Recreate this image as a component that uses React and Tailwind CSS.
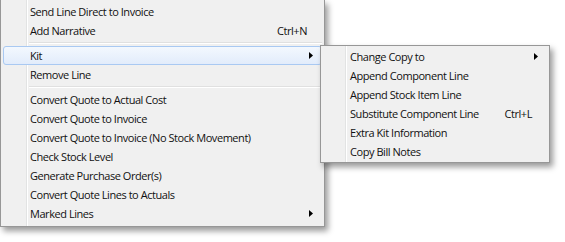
import React from "react";

const Arrow = () => (
  <svg width="4" height="7" viewBox="0 0 4 7" className="block">
    <path d="M0 0 L4 3.5 L0 7 Z" fill="#000" />
  </svg>
);

const Item = ({ label, shortcut, arrow, active, sc }) => (
  <div
    className={
      "relative flex items-center h-[19px] mx-[2px] " +
      (active
        ? "rounded-[3px] border border-[#a9c9f2] bg-gradient-to-b from-[#f3f8fe] to-[#e2ecfb]"
        : "border border-transparent")
    }
  >
    <div className="w-[26px] shrink-0" />
    <div className="flex-1 whitespace-nowrap pt-px">{label}</div>
    {shortcut && <div className={"whitespace-nowrap pt-px " + sc}>{shortcut}</div>}
    {arrow && (
      <div className="absolute right-[8px] top-[5px]">
        <Arrow />
      </div>
    )}
  </div>
);

const Sep = () => (
  <div className="h-[6px] flex flex-col justify-center ml-[28px] mr-[2px]">
    <div className="h-px bg-[#e0e0e0]" />
    <div className="h-px bg-white" />
  </div>
);

export default function App() {
  return (
    <div
      className="relative w-[565px] h-[242px] bg-white overflow-hidden text-[11px] tracking-[-0.45px] text-[#111]"
      style={{ fontFamily: '"Open Sans", "Noto Sans", sans-serif' }}
    >
      <div className="relative w-[325px] h-[227px] bg-[#f0f0f0] border-l border-r border-b border-[#979797] pt-[2px] shadow-[3px_4px_6px_rgba(0,0,0,0.4)]">
        <div className="absolute left-[25px] top-0 bottom-0 w-px bg-[#e2e3e3]" />
        <div className="absolute left-[26px] top-0 bottom-0 w-px bg-white" />
        <div className="relative">
          <Item label="Send Line Direct to Invoice" />
          <Item label="Add Narrative" shortcut="Ctrl+N" sc="mr-[14px]" />
          <Sep />
          <Item label="Kit" arrow active />
          <Item label="Remove Line" />
          <Sep />
          <Item label="Convert Quote to Actual Cost" />
          <Item label="Convert Quote to Invoice" />
          <Item label="Convert Quote to Invoice (No Stock Movement)" />
          <Item label="Check Stock Level" />
          <Item label="Generate Purchase Order(s)" />
          <Item label="Convert Quote Lines to Actuals" />
          <Item label="Marked Lines" arrow />
        </div>
      </div>

      <div className="absolute left-[320px] top-[45px] w-[230px] h-[118px] bg-[#f0f0f0] border border-[#979797] pt-[1px] shadow-[3px_4px_6px_rgba(0,0,0,0.4)]">
        <div className="absolute left-[24px] top-0 bottom-0 w-px bg-[#e2e3e3]" />
        <div className="absolute left-[25px] top-0 bottom-0 w-px bg-white" />
        <div className="relative">
          <Item label="Change Copy to" arrow />
          <Item label="Append Component Line" />
          <Item label="Append Stock Item Line" />
          <Item label="Substitute Component Line" shortcut="Ctrl+L" sc="mr-[14px]" />
          <Item label="Extra Kit Information" />
          <Item label="Copy Bill Notes" />
        </div>
      </div>
    </div>
  );
}
